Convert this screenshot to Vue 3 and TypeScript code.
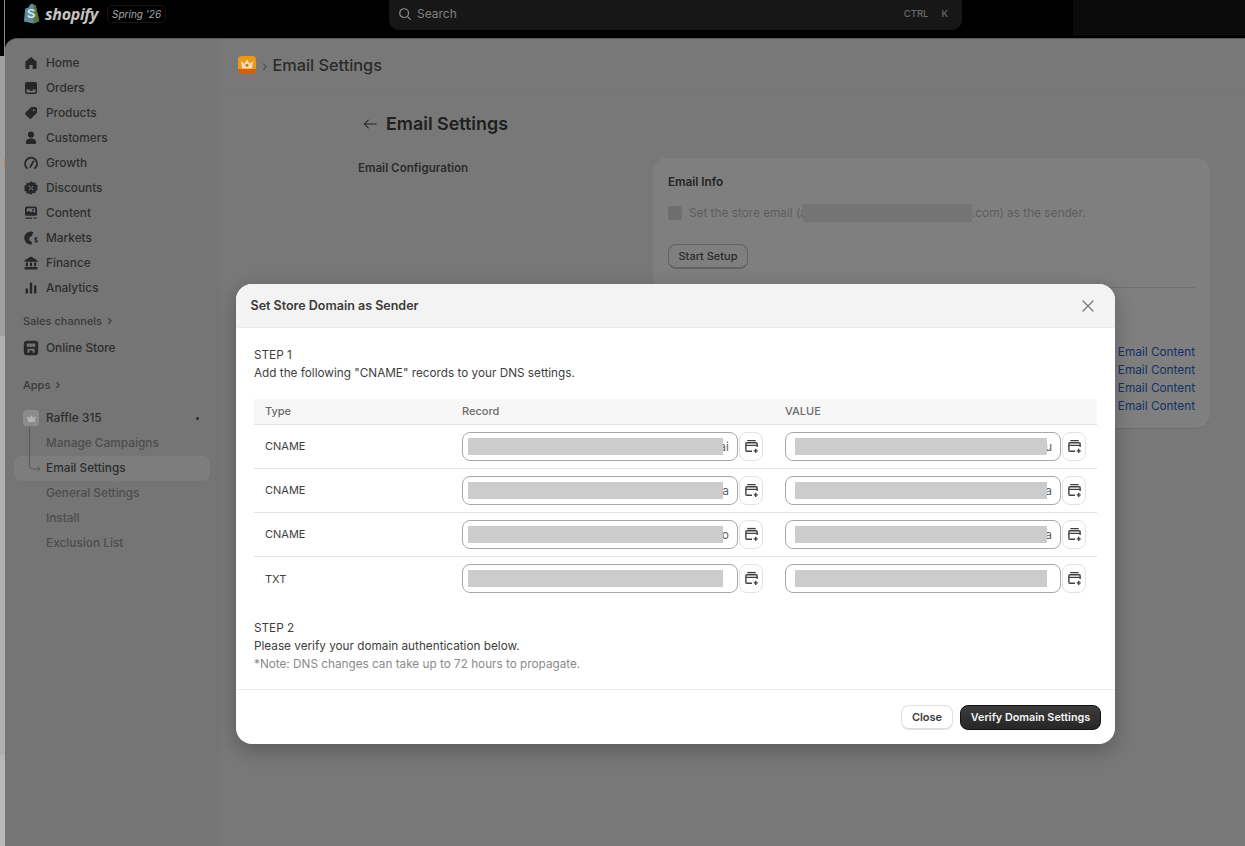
<script setup lang="ts">
interface NavItem {
  label: string;
  icon: string;
}

// filled 20x20 icons for the admin nav
const navItems: NavItem[] = [
  { label: 'Home', icon: 'M10 2.5 3 8v8a1.5 1.5 0 0 0 1.500 1.500H8V12.500h4v5h3.500A1.500 1.500 0 0 0 17 16V8z' },
  { label: 'Orders', icon: 'M5 2.500h10A2.500 2.500 0 0 1 17.500 5v10a2.500 2.500 0 0 1-2.500 2.500H5A2.500 2.500 0 0 1 2.500 15V5A2.500 2.500 0 0 1 5 2.500zM4.300 12v3c0 .4.300.700.700.700h10c.4 0 .7-.3.700-.7v-3h-3.200l-1 1.500H8.500l-1-1.500z' },
  { label: 'Products', icon: 'M11 2.500h4.500A2 2 0 0 1 17.500 4.500V9a2 2 0 0 1-.6 1.400l-6.300 6.300a2 2 0 0 1-2.800 0l-4.500-4.500a2 2 0 0 1 0-2.800l6.300-6.300A2 2 0 0 1 11 2.500zm2.500 2.800a1.200 1.200 0 1 0 0 2.400 1.200 1.200 0 0 0 0-2.400z' },
  { label: 'Customers', icon: 'M10 2a3.800 3.800 0 1 1 0 7.600A3.800 3.800 0 0 1 10 2zM3.500 15.500c0-3 2.800-4.800 6.500-4.800s6.500 1.800 6.500 4.800c0 1.200-.8 2-2 2h-9c-1.200 0-2-.8-2-2z' },
];
const navItems2: NavItem[] = [
  { label: 'Discounts', icon: 'M10 1.500l2.400 1.600 2.800-.2 1 2.600 2.300 1.500-.7 2.700.7 2.700-2.300 1.500-1 2.600-2.800-.2L10 18.500l-2.400-1.600-2.800.2-1-2.600-2.300-1.500.7-2.700-.7-2.700 2.300-1.500 1-2.600 2.800.2zM8 7a1 1 0 1 0 0 2 1 1 0 0 0 0-2zm4 4a1 1 0 1 0 0 2 1 1 0 0 0 0-2zm.2-3.800-5 5 .8.800 5-5z' },
  { label: 'Content', icon: 'M4.500 2h11A2 2 0 0 1 17.500 4v7.500a2 2 0 0 1-2 2h-11a2 2 0 0 1-2-2V4a2 2 0 0 1 2-2zm.3 2v5l2.700-1.800 2.500 2 2-1.200 3.200 2V4zM12.500 5a1.200 1.200 0 1 1 0 2.400 1.200 1.200 0 0 1 0-2.400zM3 15.500h8.500v1.800H3zm10.500 0H17v1.800h-3.500z' },
];
const navItems3: NavItem[] = [
  { label: 'Finance', icon: 'M10 2 18 6.500V8.500H2V6.500zM3.500 9.500h2.700v4.500H3.500zm5.150 0h2.700v4.500h-2.700zm5.150 0h2.700v4.500h-2.700zM2 15h16v3H2z' },
  { label: 'Analytics', icon: 'M3.200 10.500h3v6.500h-3zM8.500 3h3v14h-3zM13.800 7h3v10h-3z' },
];

const subItems = ['Manage Campaigns', 'Email Settings', 'General Settings', 'Install', 'Exclusion List'];
const linkRows = [1, 2, 3, 4];

interface DnsRow {
  type: string;
  recordTail: string;
  valueTail: string;
}

const dnsRows: DnsRow[] = [
  { type: 'CNAME', recordTail: 'ai', valueTail: 'u' },
  { type: 'CNAME', recordTail: 'a', valueTail: 'a' },
  { type: 'CNAME', recordTail: 'o', valueTail: 'a' },
  { type: 'TXT', recordTail: '', valueTail: '' },
];
</script>

<template>
  <div class="page">
    <header class="topbar">
      <div class="brand">
        <svg class="bag" viewBox="0 0 20 23" width="18" height="21">
          <path d="M2.500 6 6.500 4.500C7 2 8.500.6 10 .6c1 0 2 .6 2.500 2l1.500-.3L18 20 11.500 22.500 1 20.500z" fill="#5f8c9c" />
          <path d="M14 2.300 18 20 11.500 22.500V3z" fill="#5d7440" />
          <text x="4.500" y="17" class="bag-s">S</text>
        </svg>
        <span class="wordmark">shopify</span>
        <span class="season">Spring '26</span>
      </div>
      <div class="search">
        <svg viewBox="0 0 16 16" width="14" height="14" fill="none" stroke="#8a8a8a" stroke-width="1.400">
          <circle cx="7" cy="7" r="5" />
          <path d="m11 11 3.200 3.200" stroke-linecap="round" />
        </svg>
        <span class="search-label">Search</span>
        <span class="keys"><b>CTRL</b><b>K</b></span>
      </div>
      <div class="top-right"></div>
    </header>

    <div class="shell">
      <div class="edge"></div>
      <div class="panel">
        <aside class="sidebar">
          <nav class="nav">
            <a v-for="item in navItems" :key="item.label" class="nav-item">
              <svg viewBox="0 0 20 20" width="16" height="16"><path :d="item.icon" fill="#4e4e4e" fill-rule="evenodd" /></svg>
              <span>{{ item.label }}</span>
            </a>
            <a class="nav-item">
              <svg viewBox="0 0 20 20" width="16" height="16" fill="none" stroke="#4e4e4e" stroke-width="2.200">
                <path d="M5 16.500A7.500 7.500 0 1 1 15 16.500" stroke-linecap="round" />
                <path d="M9 15 13 8" stroke-linecap="round" />
              </svg>
              <span>Growth</span>
            </a>
            <a v-for="item in navItems2" :key="item.label" class="nav-item">
              <svg viewBox="0 0 20 20" width="16" height="16"><path :d="item.icon" fill="#4e4e4e" fill-rule="evenodd" /></svg>
              <span>{{ item.label }}</span>
            </a>
            <a class="nav-item">
              <svg viewBox="0 0 20 20" width="16" height="16">
                <path d="M9.500 2a8 8 0 1 0 0 16c.6 0 1-.1 1.500-.2V15l-3-2V9.500l3-2 2-4.800A8 8 0 0 0 9.500 2z" fill="#4e4e4e" />
                <path d="M18 10.500c-1-.8-3.300-.8-3.300.6 0 1.600 3.300.9 3.300 2.600 0 1.500-2.400 1.400-3.500.5M16.300 8.500v7.500" fill="none" stroke="#4e4e4e" stroke-width="1.300" />
              </svg>
              <span>Markets</span>
            </a>
            <a v-for="item in navItems3" :key="item.label" class="nav-item">
              <svg viewBox="0 0 20 20" width="16" height="16"><path :d="item.icon" fill="#4e4e4e" fill-rule="evenodd" /></svg>
              <span>{{ item.label }}</span>
            </a>
          </nav>

          <div class="section-head sales">Sales channels <span class="chev">›</span></div>
          <a class="nav-item">
            <svg viewBox="0 0 20 20" width="16" height="16">
              <rect x="1" y="1" width="18" height="18" rx="4" fill="#4e4e4e" />
              <path d="M4.500 4.500h11v2.800a1.800 1.800 0 0 1-3.700 0 1.800 1.800 0 0 1-3.600 0 1.800 1.800 0 0 1-3.700 0z" fill="#e4e4e4" />
              <path d="M5.500 11h9v5h-2.500v-3H8v3H5.500z" fill="#e4e4e4" />
            </svg>
            <span>Online Store</span>
          </a>

          <div class="section-head apps">Apps <span class="chev">›</span></div>
          <a class="nav-item">
            <span class="app-mini"><svg viewBox="0 0 14 14" width="11" height="11"><path d="M1.500 4 4.800 6.500 7 2.500l2.200 4L12.500 4 11 11.500H3z" fill="#b4b4b4" /></svg></span>
            <span>Raffle 315</span>
            <span class="dot"></span>
          </a>
          <div class="subnav">
            <svg class="tree" viewBox="0 0 16 46" width="16" height="46" fill="none" stroke="#b0b0b0" stroke-width="1">
              <path d="M.5 0v39q0 3 3 3H11M8.500 39.500 11 42l-2.500 2.500" />
            </svg>
            <a
              v-for="sub in subItems"
              :key="sub"
              class="sub-item"
              :class="{ active: sub === 'Email Settings' }"
            >{{ sub }}</a>
          </div>
        </aside>

        <main class="main">
          <div class="crumbs">
            <span class="app-icon"><svg viewBox="0 0 18 18" width="18" height="18"><path d="M2.800 5 6.300 7.800 9 3.500l2.700 4.300L15.200 5 13.800 12.500H4.200z" fill="#f4dcb4" /><circle cx="9" cy="9.300" r="1.500" fill="#c07a18" /></svg></span>
            <span class="crumb-sep">›</span>
            <span class="crumb-title">Email Settings</span>
          </div>
          <div class="content">
            <div class="page-title">
              <svg viewBox="0 0 16 16" width="14" height="14" fill="none" stroke="#484848" stroke-width="1.200">
                <path d="M15 8H1.500M6 3.500 1.500 8 6 12.500" stroke-linecap="round" stroke-linejoin="round" />
              </svg>
              <h1>Email Settings</h1>
            </div>
            <div class="columns">
              <h2 class="config-label">Email Configuration</h2>
              <section class="card">
                <h3>Email Info</h3>
                <label class="check-row">
                  <span class="checkbox"></span>
                  <span class="check-text">Set the store email (a<span class="redact-inline"></span>.com) as the sender.</span>
                </label>
                <button class="setup-btn">Start Setup</button>
                <hr />
                <div class="links">
                  <a v-for="n in linkRows" :key="n">Email Content</a>
                </div>
              </section>
            </div>
          </div>
        </main>
      </div>
    </div>

    <div class="overlay"></div>

    <div class="modal">
      <div class="modal-head">
        <span>Set Store Domain as Sender</span>
        <svg viewBox="0 0 12 12" width="12" height="12" fill="none" stroke="#777" stroke-width="1.200">
          <path d="M1 1l10 10M11 1 1 11" stroke-linecap="round" />
        </svg>
      </div>
      <div class="modal-body">
        <p>STEP 1</p>
        <p>Add the following "CNAME" records to your DNS settings.</p>
        <div class="dns">
          <div class="dns-row dns-head">
            <span>Type</span>
            <span>Record</span>
            <span>VALUE</span>
          </div>
          <div v-for="(row, i) in dnsRows" :key="i" class="dns-row">
            <span class="dns-type">{{ row.type }}</span>
            <div class="field">
              <div class="fake-input"><span class="redact"></span><span class="tail">{{ row.recordTail }}</span></div>
              <button class="copy-btn">
                <svg viewBox="0 0 16 16" width="15" height="15" fill="none" stroke="#404040" stroke-width="1.500">
                  <path d="M3.500 1.700h9" />
                  <path d="M8.500 13H3a1 1 0 0 1-1-1V5a1 1 0 0 1 1-1h10a1 1 0 0 1 1 1v3.500M2 6.800h12" />
                  <path d="M12.500 10.500v4.500M10.300 12.700h4.400" />
                </svg>
              </button>
            </div>
            <div class="field">
              <div class="fake-input value"><span class="redact"></span><span class="tail">{{ row.valueTail }}</span></div>
              <button class="copy-btn">
                <svg viewBox="0 0 16 16" width="15" height="15" fill="none" stroke="#404040" stroke-width="1.500">
                  <path d="M3.500 1.700h9" />
                  <path d="M8.500 13H3a1 1 0 0 1-1-1V5a1 1 0 0 1 1-1h10a1 1 0 0 1 1 1v3.500M2 6.800h12" />
                  <path d="M12.500 10.500v4.500M10.300 12.700h4.400" />
                </svg>
              </button>
            </div>
          </div>
        </div>
        <p class="step2">STEP 2</p>
        <p>Please verify your domain authentication below.</p>
        <p class="note">*Note: DNS changes can take up to 72 hours to propagate.</p>
      </div>
      <div class="modal-foot">
        <button class="btn-close">Close</button>
        <button class="btn-verify">Verify Domain Settings</button>
      </div>
    </div>
  </div>
</template>

<style>
html,
body {
  margin: 0;
  background: #000;
}
</style>

<style scoped>
* {
  box-sizing: border-box;
}

.page {
  position: relative;
  width: 1245px;
  height: 846px;
  overflow: hidden;
  background: #000;
  font-family: Inter, "Liberation Sans", sans-serif;
  color: #303030;
}

.topbar {
  display: flex;
  height: 38px;
  background: linear-gradient(90deg, #000 4px, #8f8f8f 4px, #8f8f8f 5px, #000 5px);
}

.brand {
  display: flex;
  align-items: flex-start;
  width: 389px;
  padding: 3px 0 0 23px;
}

.bag-s {
  font: 700 14px "Liberation Sans", sans-serif;
  fill: #d8e4e8;
}

.wordmark {
  margin-left: 4px;
  font: italic 700 16px/22px "Open Sans", sans-serif;
  letter-spacing: -0.3px;
  color: #c4c4c4;
}

.season {
  height: 18px;
  margin: 2px 0 0 9px;
  padding: 0 4px;
  border: 1px solid #161616;
  border-radius: 5px;
  font: italic 400 10px/16px Inter, sans-serif;
  color: #a8a8a8;
}

.search {
  display: flex;
  align-items: center;
  gap: 5px;
  width: 573px;
  height: 30px;
  padding: 0 9px 3px;
  background: #171717;
  border-radius: 0 0 10px 10px;
}

.search-label {
  font-size: 12px;
  color: #808080;
}

.keys {
  display: flex;
  gap: 13px;
  margin-left: auto;
  padding-right: 5px;
  font-size: 9.5px;
  color: #6a6a6a;
}

.keys b {
  font-weight: 500;
}

.top-right {
  width: 172px;
  height: 36px;
  margin-left: 111px;
  background: #0b0b0b;
}

.shell {
  display: flex;
  height: 808px;
}

.edge {
  position: relative;
  width: 5px;
  background: linear-gradient(#000 18px, #a0a0a0 18px, #a0a0a0 298px, #b0b0b0 298px, #b0b0b0 717px, #b8b8b8 717px);
}

/* sliver of the window behind, with a bright line by the panel */
.edge::before {
  content: "";
  position: absolute;
  right: 0;
  top: 0;
  width: 1px;
  height: 18px;
  background: #8f8f8f;
}

.edge::after {
  content: "";
  position: absolute;
  right: 0;
  top: 120px;
  width: 1px;
  height: 10px;
  background: #b98a5c;
}

.panel {
  flex: 1;
  display: flex;
  overflow: hidden;
  background: #ebebeb;
  border-top: 1px solid #b0b0b0;
  border-radius: 12px 0 0 0;
}

.sidebar {
  flex-shrink: 0;
  width: 215px;
  padding: 11px 10px 0 9px;
}

.nav {
  display: flex;
  flex-direction: column;
}

.nav-item {
  display: flex;
  align-items: center;
  gap: 7px;
  height: 25.1px;
  padding-left: 9px;
  font-size: 11.85px;
  font-weight: 500;
  color: #5c5c5c;
}

.section-head {
  padding-left: 9px;
  font-size: 11px;
  font-weight: 500;
  line-height: 16px;
  color: #767676;
}

.sales {
  margin-top: 11.5px;
  margin-bottom: 6px;
}

.apps {
  margin-top: 15px;
  margin-bottom: 13px;
}

.chev {
  margin-left: 2px;
  font-size: 13px;
}

.app-mini {
  position: relative;
  z-index: 2;
  display: flex;
  align-items: center;
  justify-content: center;
  width: 16px;
  height: 16px;
  background: #8c8c8c;
  border-radius: 3px;
}

.dot {
  width: 3px;
  height: 3px;
  margin-left: auto;
  margin-right: 11px;
  background: #4e4e4e;
  border-radius: 50%;
}

.subnav {
  position: relative;
  display: flex;
  flex-direction: column;
}

.tree {
  position: absolute;
  left: 15px;
  top: -4px;
}

.sub-item {
  height: 25px;
  padding-left: 32px;
  font-size: 11.85px;
  font-weight: 500;
  line-height: 25px;
  color: #9a9a9a;
}

.sub-item.active {
  background: #fbfbfb;
  border-radius: 8px;
  color: #5c5c5c;
}

.main {
  flex: 1;
  background: #f1f1f1;
}

.crumbs {
  display: flex;
  align-items: center;
  height: 50px;
  padding: 3px 0 0 18px;
  border-bottom: 1px solid #ececec;
}

.app-icon {
  position: relative;
  z-index: 2;
  display: block;
  width: 18px;
  height: 18px;
  background: linear-gradient(#e89a1e 75%, #d2600f 75%);
  border-radius: 4px;
}

.crumb-sep {
  margin: 0 5px 0 6px;
  font-size: 14px;
  color: #999;
}

.crumb-title {
  font-size: 16.3px;
  font-weight: 500;
  color: #565656;
}

.content {
  padding: 0 35px 0 138px;
}

.page-title {
  display: flex;
  align-items: center;
  gap: 9px;
  height: 26px;
  margin-top: 21.5px;
  padding-left: 5px;
}

.page-title h1 {
  margin: 0;
  font-size: 17.9px;
  font-weight: 600;
  color: #3e3e3e;
}

.columns {
  display: flex;
  justify-content: space-between;
  margin-top: 21.5px;
}

.config-label {
  margin: 2px 0 0;
  font-size: 11.6px;
  font-weight: 600;
  line-height: 16px;
  color: #565656;
}

.card {
  width: 557px;
  height: 270px;
  padding: 16px 15px;
  background: #fff;
  border-radius: 14px;
  box-shadow: 0 1px 1px rgba(0, 0, 0, 0.1);
}

.card h3 {
  margin: 0;
  font-size: 11.7px;
  font-weight: 600;
  line-height: 16px;
  color: #484848;
}

.check-row {
  display: flex;
  align-items: center;
  gap: 7px;
  margin-top: 14px;
}

.checkbox {
  width: 14px;
  height: 14px;
  background: #dcdcdc;
  border-radius: 3px;
}

.check-text {
  display: flex;
  align-items: center;
  font-size: 11.8px;
  color: #bcbcbc;
}

.redact-inline {
  display: inline-block;
  width: 169px;
  height: 18px;
  margin-left: -4px;
  background: #e8e8e8;
}

.setup-btn {
  display: block;
  width: 80px;
  height: 25px;
  margin-top: 22px;
  padding: 0;
  background: #fff;
  border: 1px solid #c4c4c4;
  border-bottom-width: 2px;
  border-radius: 8px;
  font: 500 11px Inter, sans-serif;
  color: #565656;
}

.card hr {
  margin: 18px 0 0;
  border: 0;
  border-top: 1px solid #e3e3e3;
}

.links {
  display: flex;
  flex-direction: column;
  align-items: flex-end;
  margin-top: 55px;
  font-size: 11.8px;
  line-height: 18px;
  color: #2a66c8;
}

.overlay {
  position: absolute;
  z-index: 1;
  left: 5px;
  right: 0;
  top: 38px;
  bottom: 0;
  background: rgba(0, 0, 0, 0.5);
}

.modal {
  position: absolute;
  z-index: 3;
  left: 236px;
  top: 284px;
  display: flex;
  flex-direction: column;
  width: 879px;
  height: 460px;
  overflow: hidden;
  background: #fff;
  border-radius: 16px;
  box-shadow: 0 6px 20px rgba(0, 0, 0, 0.25);
}

.modal-head {
  display: flex;
  align-items: center;
  justify-content: space-between;
  height: 44px;
  padding: 0 21px 0 14.5px;
  background: #f3f3f3;
  border-bottom: 1px solid #ebebeb;
  font-size: 12.5px;
  font-weight: 600;
  color: #3a3a3a;
}

.modal-body {
  flex: 1;
  padding: 17.5px 18px 0;
  font-size: 11.75px;
  line-height: 18px;
  color: #404040;
}

.modal-body p {
  margin: 0;
}

.dns {
  margin-top: 17px;
}

.dns-row {
  display: grid;
  grid-template-columns: 197px 323px 1fr;
  align-items: center;
  height: 44px;
  padding: 0 11px;
  border-bottom: 1px solid #e3e3e3;
  font-size: 11px;
}

.dns-row:last-child {
  border-bottom: 0;
}

.dns-head {
  height: 26px;
  background: #f7f7f7;
  font-weight: 500;
  color: #6b6b6b;
}

.dns-type {
  font-weight: 400;
  color: #404040;
}

.field {
  display: flex;
  align-items: center;
  gap: 1px;
}

.fake-input {
  position: relative;
  width: 276px;
  height: 29px;
  background: #fff;
  border: 1px solid #a8a8a8;
  border-radius: 8px;
}

.tail {
  position: absolute;
  right: 8px;
  top: 0;
  font-size: 12px;
  line-height: 27px;
  color: #616161;
}

.redact {
  position: absolute;
  z-index: 1;
  left: 5px;
  top: 5px;
  width: 255px;
  height: 17px;
  background: #ccc;
}

.value .redact {
  left: 9px;
  width: 252px;
}

.copy-btn {
  display: flex;
  align-items: center;
  justify-content: center;
  width: 24px;
  height: 29px;
  padding: 0;
  background: #fff;
  border: 1px solid #e3e3e3;
  border-radius: 8px;
}

.modal-body .step2 {
  margin-top: 18px;
}

.modal-body .note {
  color: #8a8a8a;
}

.modal-foot {
  display: flex;
  justify-content: flex-end;
  align-items: flex-start;
  gap: 7px;
  height: 55px;
  padding: 15px 14px 0 0;
  border-top: 1px solid #ebebeb;
}

.btn-close {
  width: 52px;
  height: 25px;
  padding: 0;
  background: #fff;
  border: 1px solid #e0e0e0;
  border-bottom-width: 2px;
  border-radius: 8px;
  font: 600 11px Inter, sans-serif;
  color: #3a3a3a;
}

.btn-verify {
  width: 141px;
  height: 25px;
  padding: 0;
  background: linear-gradient(#3d3d3d, #262626);
  border: 1px solid #111;
  border-radius: 8px;
  font: 600 10.8px Inter, sans-serif;
  color: #f4f4f4;
}
</style>
